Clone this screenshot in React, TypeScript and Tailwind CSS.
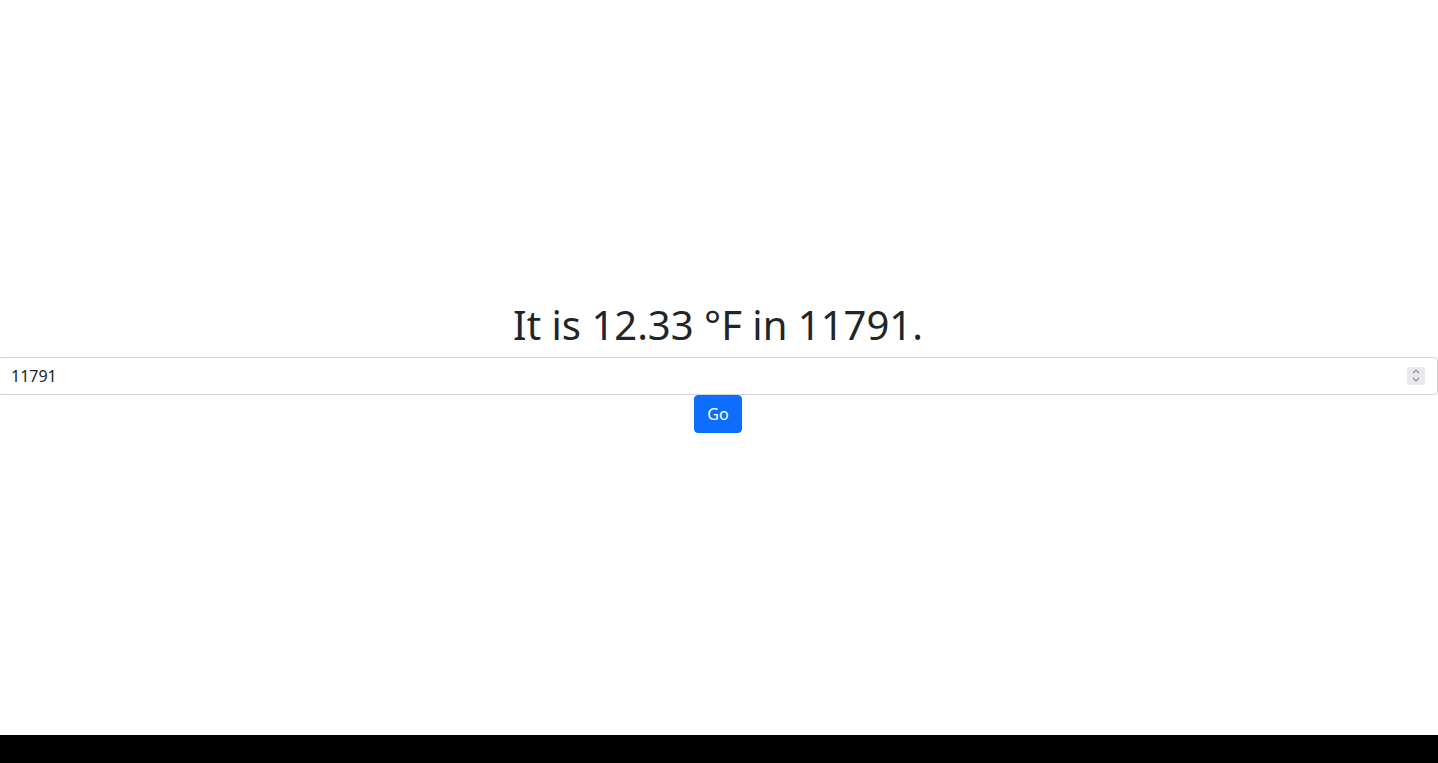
import { useState } from 'react';

export default function App() {
  const [zip, setZip] = useState('11791');

  return (
    <div className="flex flex-col min-h-[763px] bg-black" style={{ fontFamily: '"Noto Sans", sans-serif' }}>
      <div className="h-[735px] pb-[2px] bg-white flex flex-col items-center justify-center text-[#212529]">
        <h1 className="-ml-[2px] text-[40px] leading-[1.2] font-normal mb-2">It is 12.33 °F in 11791.</h1>
        <div className="relative w-full">
          <input
            type="number"
            value={zip}
            onChange={e => setZip(e.target.value)}
            className="block w-[calc(100%+2px)] -ml-[2px] h-[38px] px-3 py-1.5 text-base leading-6 border border-[#ced4da] rounded-[4px] bg-white text-[#212529] outline-none [&::-webkit-inner-spin-button]:appearance-none"
          />
          {/* spinner drawn, chrome only shows it on hover */}
          <div className="absolute right-[13px] top-[10px] w-[18px] h-[18px] bg-[#e9e9ed] rounded-[2px] flex flex-col items-center justify-center gap-[3px] pointer-events-none">
            <svg width="8" height="5" viewBox="0 0 8 5" fill="none" stroke="#8a8a8f" strokeWidth="1.2">
              <path d="M1 4.2 L4 1.2 L7 4.2" />
            </svg>
            <svg width="8" height="5" viewBox="0 0 8 5" fill="none" stroke="#8a8a8f" strokeWidth="1.2">
              <path d="M1 0.8 L4 3.8 L7 0.8" />
            </svg>
          </div>
        </div>
        <button className="-ml-[2px] h-[38px] px-3 py-1.5 text-base leading-6 text-white bg-[#0d6efd] border border-[#0d6efd] rounded-[4px]">
          Go
        </button>
      </div>
      <div className="h-[28px] bg-black" />
    </div>
  );
}
